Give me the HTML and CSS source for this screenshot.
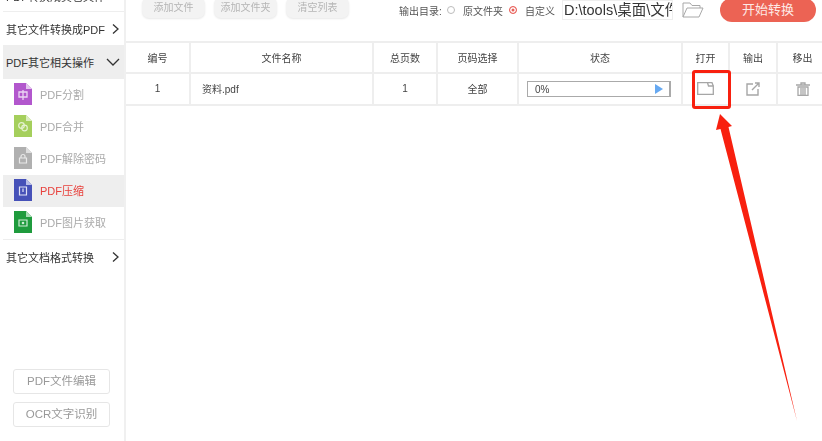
FILE: index.html
```html
<!DOCTYPE html>
<html>
<head>
<meta charset="utf-8">
<title>PDF转换器</title>
<link rel="stylesheet" href="styles.css">
</head>
<body>
<div class="app">
	<div class="side">
		<div class="group group_cut"><span>PDF转换成其它文件</span></div>
		<div class="group"><span>其它文件转换成PDF</span>
			<svg class="chev" width="10" height="14" viewBox="0 0 10 14"><path d="M3 2.500 8 7 3 11.500" /></svg>
		</div>
		<div class="group group_open"><span>PDF其它相关操作</span>
			<svg class="chev_down" width="14" height="10" viewBox="0 0 14 10"><path d="M1 2 7 8 13 2" /></svg>
		</div>
		<div class="item">
			<svg class="doc" width="18" height="22" viewBox="0 0 18 22"><path d="M0 0H12L18 6V22H0Z" fill="#b257cd"/><path d="M12 0 18 6H12Z" fill="#e3c5ee"/><path d="M5 9H13V14H5ZM9 7V17" fill="none" stroke="#ecd6f3" stroke-width="1.300"/></svg>
			<span>PDF分割</span>
		</div>
		<div class="item">
			<svg class="doc" width="18" height="22" viewBox="0 0 18 22"><path d="M0 0H12L18 6V22H0Z" fill="#a5cf5c"/><path d="M12 0 18 6H12Z" fill="#dcedc0"/><circle cx="7.500" cy="10.500" r="2.800" fill="none" stroke="#e6f2d2" stroke-width="1.200"/><circle cx="10.500" cy="13" r="2.800" fill="none" stroke="#e6f2d2" stroke-width="1.200"/></svg>
			<span>PDF合并</span>
		</div>
		<div class="item">
			<svg class="doc" width="18" height="22" viewBox="0 0 18 22"><path d="M0 0H12L18 6V22H0Z" fill="#b0b0b0"/><path d="M12 0 18 6H12Z" fill="#dedede"/><path d="M5.500 11H12.500V16H5.500ZM7 11V9.500A2 2 0 0 1 11 9.500V11" fill="none" stroke="#e8e8e8" stroke-width="1.200"/></svg>
			<span>PDF解除密码</span>
		</div>
		<div class="item item_on">
			<svg class="doc" width="18" height="22" viewBox="0 0 18 22"><path d="M0 0H12L18 6V22H0Z" fill="#4651b8"/><path d="M12 0 18 6H12Z" fill="#b9bee6"/><path d="M5.500 8H12.500V16H5.500ZM9 9.500V13" fill="none" stroke="#dfe1f5" stroke-width="1.200"/></svg>
			<span>PDF压缩</span>
		</div>
		<div class="item">
			<svg class="doc" width="18" height="22" viewBox="0 0 18 22"><path d="M0 0H12L18 6V22H0Z" fill="#1f9b3d"/><path d="M12 0 18 6H12Z" fill="#a9dcb5"/><path d="M5 9H13V15H5Z" fill="none" stroke="#cdebd4" stroke-width="1.200"/><circle cx="9" cy="12" r="1.300" fill="#cdebd4"/></svg>
			<span>PDF图片获取</span>
		</div>
		<div class="group group_last"><span>其它文档格式转换</span>
			<svg class="chev" width="10" height="14" viewBox="0 0 10 14"><path d="M3 2.500 8 7 3 11.500" /></svg>
		</div>
		<div class="side_btns">
			<div class="side_btn">PDF文件编辑</div>
			<div class="side_btn">OCR文字识别</div>
		</div>
	</div>

	<div class="main">
		<div class="toolbar">
			<div class="tool_btn">添加文件</div>
			<div class="tool_btn">添加文件夹</div>
			<div class="tool_btn">清空列表</div>
			<div class="out">
				<span class="out_label">输出目录:</span>
				<i class="radio"></i><span class="radio_label">原文件夹</span>
				<i class="radio radio_on"></i><span class="radio_label">自定义</span>
				<div class="path"><span>D:\tools\桌面\文件</span></div>
				<svg class="folder" width="22" height="16" viewBox="0 0 22 16"><path d="M1 15V1H8L10 3.500H18V6M1 15H17L21 6H5L1 15Z" fill="none" stroke="#a8a8a8" stroke-width="1"/></svg>
				<div class="start">开始转换</div>
			</div>
		</div>

		<table class="list">
			<tr class="list_head">
				<th class="c_no">编号</th>
				<th class="c_name">文件名称</th>
				<th class="c_pages">总页数</th>
				<th class="c_sel">页码选择</th>
				<th class="c_state">状态</th>
				<th class="c_open">打开</th>
				<th class="c_out">输出</th>
				<th>移出</th>
			</tr>
			<tr class="list_row">
				<td class="cell_text">1</td>
				<td class="cell_text file_name">资料.pdf</td>
				<td class="cell_text">1</td>
				<td class="cell_text">全部</td>
				<td>
					<div class="progress"><span>0%</span><i class="play"></i></div>
				</td>
				<td>
					<svg class="ico" width="17" height="13" viewBox="0 0 17 13"><path d="M.7.700H10.500L11.500 4H16.300V12.300H.7ZM10.500.700H15L16.300 4" fill="none" stroke="#a6a6a6" stroke-width="1.300"/></svg>
				</td>
				<td>
					<svg class="ico" width="14" height="14" viewBox="0 0 14 14"><path d="M7 2H1V13H12V7M6 8 13 1M9 1H13V5" fill="none" stroke="#a6a6a6" stroke-width="1.400"/></svg>
				</td>
				<td>
					<svg class="ico" width="14" height="14" viewBox="0 0 14 14"><path d="M0 3H14M5 3V1H9V3M2 5H12V13.500H2ZM5 6V13M7 6V13M9 6V13" fill="none" stroke="#a6a6a6" stroke-width="1.300"/></svg>
				</td>
			</tr>
		</table>
	</div>

	<!-- red marking drawn over the screenshot -->
	<div class="mark_box"></div>
	<svg class="mark_arrow" width="84" height="310" viewBox="0 0 84 310"><path d="M4 0 16 12 12.500 13 81 307 4.500 15 0 16Z" fill="#f8200f"/></svg>
</div>
</body>
</html>
```

FILE: styles.css
```css
html, body {
	margin: 0;
	padding: 0;
	background: #fff;
	overflow: hidden;
}
body {
	font-family: "Liberation Sans", "Noto Sans CJK SC", sans-serif;
	color: #555;
}
.app {
	position: relative;
	display: flex;
	width: 822px;
	height: 441px;
	overflow: hidden;
}

/* left menu */
.side {
	display: flex;
	flex-direction: column;
	flex: none;
	box-sizing: border-box;
	width: 126px;
	height: 441px;
	padding-left: 3px;
	border-right: 2px solid #f0f0f0;
	filter: blur(.35px);
}
.group {
	display: flex;
	align-items: center;
	justify-content: space-between;
	flex: none;
	height: 33px;
	padding: 0 4px 0 3px;
	font-size: 11px;
	color: #333;
	white-space: nowrap;
}
.group_cut {
	box-sizing: border-box;
	height: 12px;
	overflow: hidden;
	align-items: flex-end;
	border-bottom: 1px solid #eee;
}
.group_cut span {
	margin-bottom: 7px;
}
.group_open {
	height: 33.5px;
	background: #eee;
}
.group_last {
	height: 34px;
	border-top: 1px solid #eee;
}
.chev, .chev_down {
	flex: none;
	fill: none;
	stroke: #333;
	stroke-width: 1.300;
}
.item {
	display: flex;
	align-items: center;
	flex: none;
	height: 32px;
	padding-left: 11px;
	font-size: 11px;
	color: #aaa;
}
.item span {
	margin: 0 0 2px 8px;
}
.doc {
	flex: none;
	margin-bottom: 1px;
}
.item_on {
	background: #eee;
	color: #e8413c;
}
.side_btns {
	margin-top: auto;
	display: flex;
	flex-direction: column;
	gap: 8px;
	padding: 0 0 14px 10px;
}
.side_btn {
	box-sizing: border-box;
	width: 97px;
	height: 25px;
	line-height: 23px;
	border: 1px solid #e6e6e6;
	border-radius: 3px;
	text-align: center;
	font-size: 11.500px;
	color: #999;
}

/* top bar */
.main {
	flex: 1;
	min-width: 0;
}
.toolbar {
	display: flex;
	align-items: flex-start;
	box-sizing: border-box;
	height: 44px;
	margin-top: -3px;
	padding-left: 16px;
	filter: blur(.35px);
}
.tool_btn {
	flex: none;
	width: 63px;
	height: 21px;
	line-height: 21px;
	margin-right: 9px;
	background: #f3f3f3;
	border-radius: 7px;
	box-shadow: 0 1px 2px #e8e8e8;
	text-align: center;
	font-size: 10px;
	color: #b5b5b5;
}
.out {
	display: flex;
	align-items: center;
	margin-left: 41px;
	height: 26px;
	font-size: 10px;
	color: #555;
	white-space: nowrap;
}
.out_label {
	width: 48px;
}
.radio {
	flex: none;
	box-sizing: border-box;
	width: 8px;
	height: 8px;
	margin-right: 8px;
	border: 1px solid #bbb;
	border-radius: 50%;
}
.radio_on {
	border-color: #e8605a;
	background: #e8605a;
	box-shadow: inset 0 0 0 1.500px #fff;
}
.radio_label {
	width: 46px;
}
.radio_label:nth-of-type(3) {
	width: 37px;
}
.path {
	flex: none;
	box-sizing: border-box;
	width: 111px;
	height: 20px;
	padding-left: 1px;
	overflow: hidden;
	border: 1px solid #eee;
	line-height: 18px;
	font-size: 14.500px;
	color: #333;
}
.folder {
	flex: none;
	margin-left: 9px;
}
.start {
	flex: none;
	width: 96px;
	height: 24px;
	line-height: 24px;
	margin-left: 16px;
	background: #ec6354;
	border-radius: 12px;
	text-align: center;
	font-size: 13px;
	color: #fde9e5;
}

/* file list */
.list {
	border-collapse: collapse;
	table-layout: fixed;
	width: 701px;
	font-size: 10px;
	color: #444;
	filter: blur(.35px);
}
.list th, .list td {
	box-sizing: border-box;
	padding: 0;
	border: 1px solid #eee;
	border-width: 2px 2px 2px 0;
	text-align: center;
	font-weight: normal;
}
.list th:last-child, .list td:last-child {
	border-right: 0;
}
.list_head {
	height: 31px;
}
.list_row {
	height: 32px;
}
.list .cell_text {
	padding-bottom: 2px;
}
.c_no { width: 64px; }
.c_name { width: 183px; }
.c_pages { width: 64px; }
.c_sel { width: 81px; }
.c_state { width: 164px; }
.c_open { width: 47px; }
.c_out { width: 48px; }
.list .file_name {
	text-align: left;
	padding-left: 11px;
}
.progress {
	display: flex;
	align-items: center;
	justify-content: space-between;
	box-sizing: border-box;
	width: 144px;
	height: 16px;
	margin-left: 8px;
	padding: 0 6px 0 7px;
	border: 1px solid #aaa;
	border-right-width: 2px;
}
.play {
	width: 0;
	height: 0;
	border-left: 8px solid #66a9f2;
	border-top: 5px solid transparent;
	border-bottom: 5px solid transparent;
}
.ico {
	display: block;
	margin: -1px auto 0;
}

/* red marking */
.mark_box {
	position: absolute;
	left: 692px;
	top: 70px;
	width: 33px;
	height: 33px;
	border: 3px solid #f8200f;
	border-radius: 3px;
}
.mark_arrow {
	position: absolute;
	left: 716px;
	top: 114px;
}
```
